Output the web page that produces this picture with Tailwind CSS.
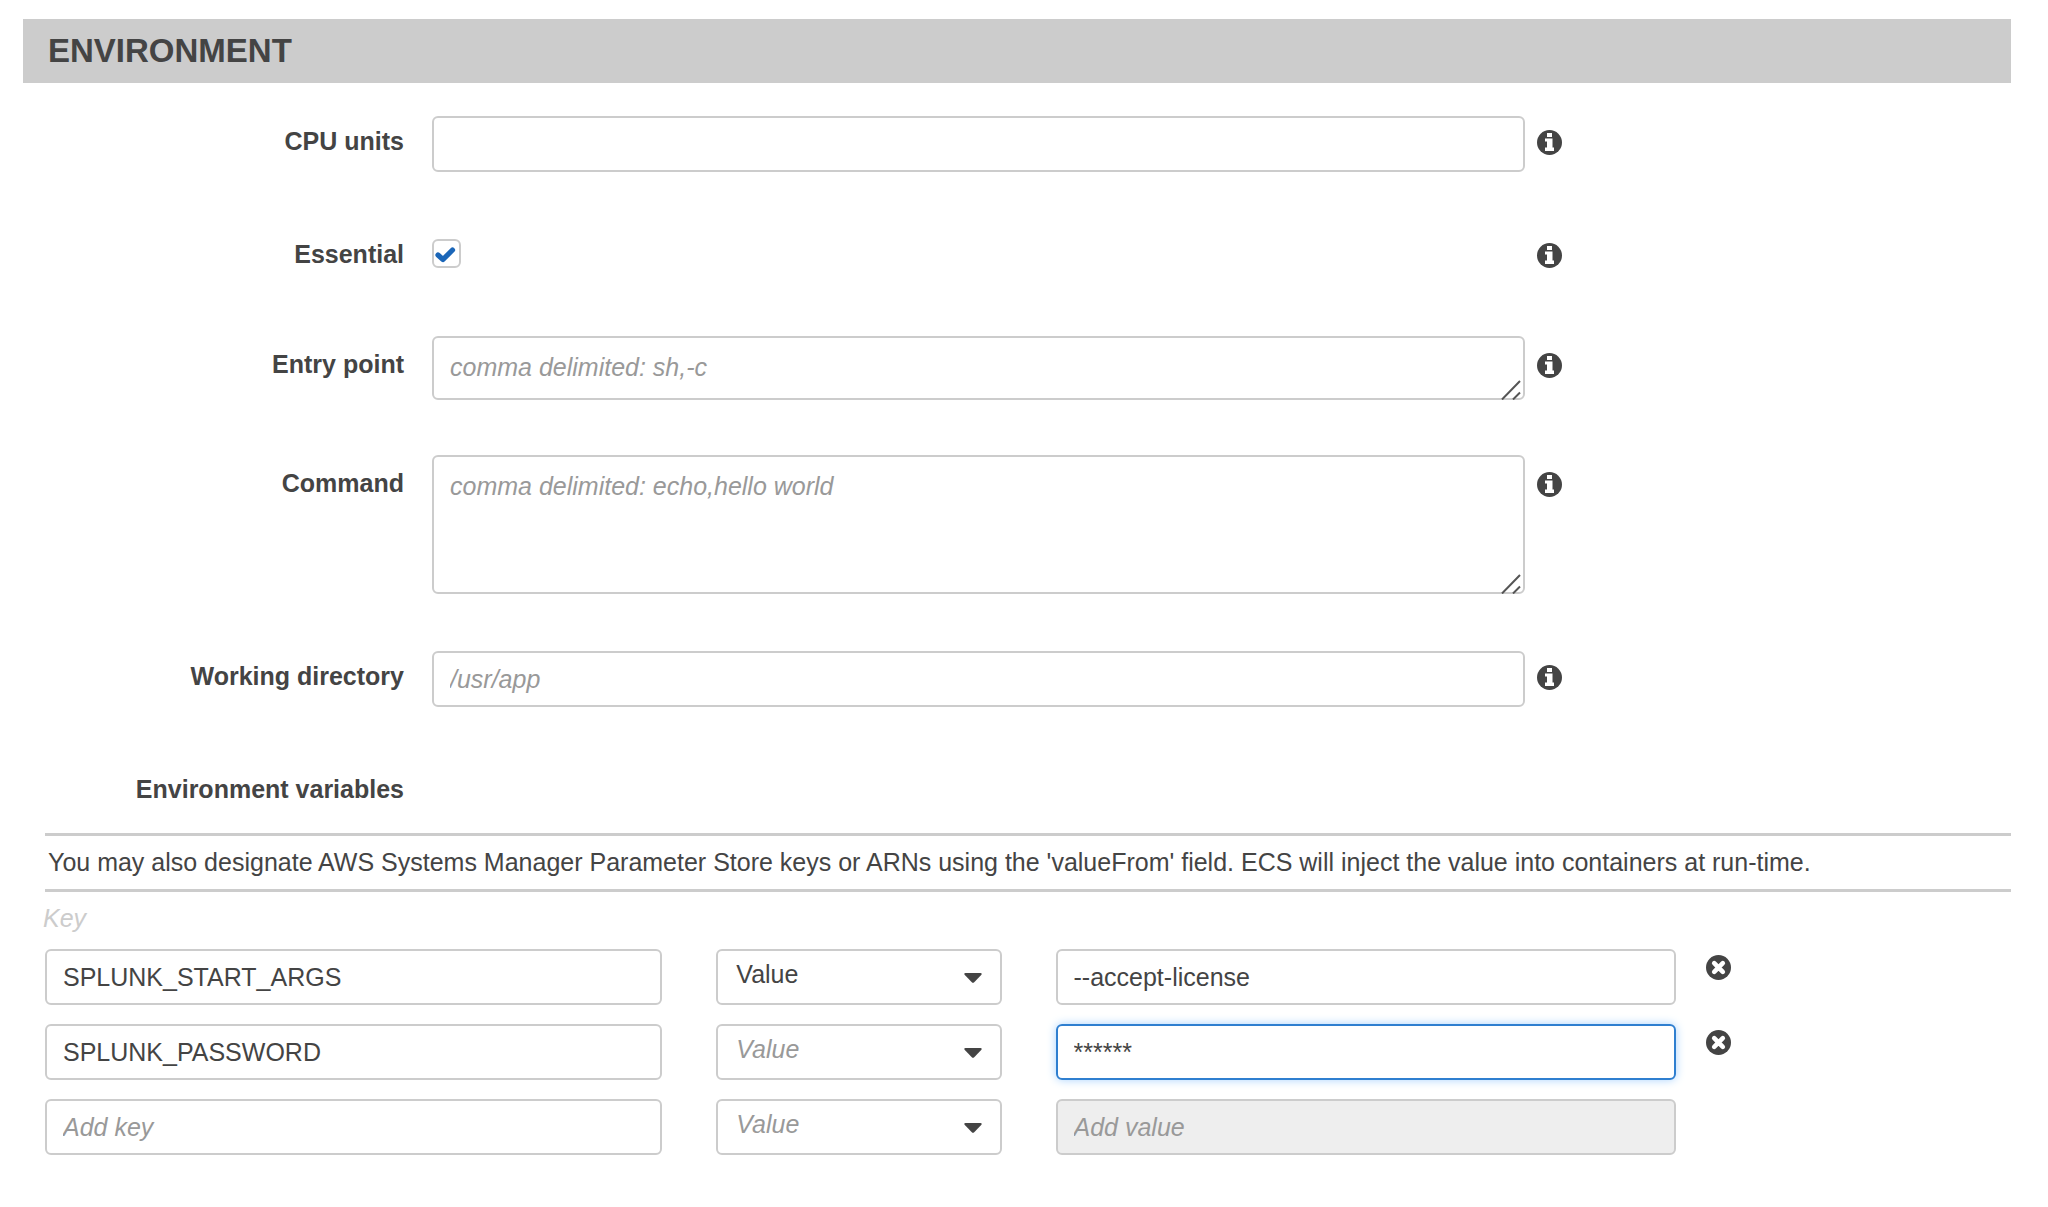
<!DOCTYPE html>
<html lang="en">
<head>
<meta charset="utf-8">
<meta name="viewport" content="width=device-width, initial-scale=1">
<title>Environment</title>
<script src="https://cdn.jsdelivr.net/npm/@tailwindcss/browser@4"></script>
</head>
<body class="bg-white font-['Liberation_Sans',Arial,sans-serif] text-[25px] leading-[30px] text-[#444]">
<!-- Shared icons -->
<svg class="hidden" aria-hidden="true">
  <symbol id="info" viewBox="0 0 25 25">
    <circle cx="12.5" cy="12.5" r="12.5" fill="#444"/>
    <path d="M10 3h5v4h-5zM8 8.500h7.500v9H17v3.500H8v-3.500h2v-6H8z" fill="#fff"/>
  </symbol>
  <symbol id="remove" viewBox="0 0 25 25">
    <circle cx="12.500" cy="12.500" r="12.500" fill="#444"/>
    <path d="M8.200 8.200l8.600 8.600M16.800 8.200l-8.600 8.600" stroke="#fff" stroke-width="4.600" stroke-linecap="round" fill="none"/>
  </symbol>
  <symbol id="grip" viewBox="0 0 20 20">
    <path d="M1 19.500L19 1M12 19.500l7-7" stroke="#555" stroke-width="2" fill="none"/>
  </symbol>
  <symbol id="caret" viewBox="0 0 18 10">
    <path d="M1.500 0h15q2 .3.700 2l-7 7.300q-1.200 1-2.400 0L.8 2Q-.5.3 1.500 0z" fill="#444"/>
  </symbol>
</svg>
<main class="pt-[19px] pr-[37px] pb-12 pl-[23px]">
  <h1 class="flex h-16 items-center bg-[#ccc] px-[25px] text-[33px] font-bold leading-10">ENVIRONMENT</h1>

  <form class="flex flex-col">
    <div class="mt-[33px] grid grid-cols-[381px_1121fr_486fr] items-start">
      <label for="cpu" class="pt-[10px] text-right font-bold">CPU units</label>
      <input id="cpu" type="text" class="ml-7 h-14 rounded-md border-2 border-[#ccc] px-4 placeholder:italic placeholder:text-[#999]">
      <button type="button" aria-label="About CPU units" class="mt-[14px] ml-3 size-[25px]"><svg class="size-full"><use href="#info"/></svg></button>
    </div>

    <div class="mt-[67px] grid grid-cols-[381px_1121fr_486fr] items-start">
      <label for="essential" class="text-right font-bold">Essential</label>
      <span class="relative ml-7 size-[29px]">
        <input id="essential" type="checkbox" checked class="block size-full appearance-none rounded-md border-2 border-[#ccc] bg-white">
        <svg class="pointer-events-none absolute inset-0 size-full" viewBox="0 0 29 29"><path d="M6 16l5 4.500L20.500 11" stroke="#1b66b8" stroke-width="5.200" stroke-linecap="round" stroke-linejoin="round" fill="none"/></svg>
      </span>
      <button type="button" aria-label="About Essential" class="mt-1 ml-3 size-[25px]"><svg class="size-full"><use href="#info"/></svg></button>
    </div>

    <div class="mt-[67px] grid grid-cols-[381px_1121fr_486fr] items-start">
      <label for="entry" class="pt-[13px] text-right font-bold">Entry point</label>
      <div class="relative ml-7">
        <textarea id="entry" placeholder="comma delimited: sh,-c" class="block h-16 w-full resize-none overflow-hidden rounded-md border-2 border-[#ccc] px-4 py-[14px] placeholder:italic placeholder:text-[#999]"></textarea>
        <svg class="pointer-events-none absolute right-1 bottom-0 size-5"><use href="#grip"/></svg>
      </div>
      <button type="button" aria-label="About Entry point" class="mt-[17px] ml-3 size-[25px]"><svg class="size-full"><use href="#info"/></svg></button>
    </div>

    <div class="mt-[55px] grid grid-cols-[381px_1121fr_486fr] items-start">
      <label for="command" class="pt-[13px] text-right font-bold">Command</label>
      <div class="relative ml-7">
        <textarea id="command" placeholder="comma delimited: echo,hello world" class="block h-[139px] w-full resize-none overflow-hidden rounded-md border-2 border-[#ccc] px-4 py-[14px] placeholder:italic placeholder:text-[#999]"></textarea>
        <svg class="pointer-events-none absolute right-1 bottom-0 size-5"><use href="#grip"/></svg>
      </div>
      <button type="button" aria-label="About Command" class="mt-[17px] ml-3 size-[25px]"><svg class="size-full"><use href="#info"/></svg></button>
    </div>

    <div class="mt-[57px] grid grid-cols-[381px_1121fr_486fr] items-start">
      <label for="workdir" class="pt-[10px] text-right font-bold">Working directory</label>
      <input id="workdir" type="text" placeholder="/usr/app" class="ml-7 h-14 rounded-md border-2 border-[#ccc] px-4 placeholder:italic placeholder:text-[#999]">
      <button type="button" aria-label="About Working directory" class="mt-[14px] ml-3 size-[25px]"><svg class="size-full"><use href="#info"/></svg></button>
    </div>

    <h2 class="mt-[67px] w-[381px] text-right font-bold">Environment variables</h2>

    <p class="mt-[29px] ml-[22px] border-y-3 border-[#ccc] px-[3px] pt-[11px] pb-3">You may also designate AWS Systems Manager Parameter Store keys or ARNs using the 'valueFrom' field. ECS will inject the value into containers at run-time.</p>

    <div class="mt-[11px] ml-5 italic text-[#ccc]">Key</div>

    <div class="mt-4 ml-[22px] flex flex-col gap-[19px]">
      <div class="grid grid-cols-[617fr_285fr_620fr_281fr] gap-x-[54px]">
        <input type="text" aria-label="Key 1" value="SPLUNK_START_ARGS" class="h-14 min-w-0 rounded-md border-2 border-[#ccc] px-4">
        <div class="relative">
          <select aria-label="Type 1" class="h-14 w-full appearance-none rounded-md border-2 border-[#ccc] bg-white px-[18px] pb-[6px]"><option>Value</option><option>ValueFrom</option></select>
          <svg class="pointer-events-none absolute top-6 right-5 h-[10px] w-[18px]"><use href="#caret"/></svg>
        </div>
        <input type="text" aria-label="Value 1" value="--accept-license" class="h-14 min-w-0 rounded-md border-2 border-[#ccc] px-4">
        <button type="button" aria-label="Remove variable 1" class="mt-[6px] -ml-6 size-[25px]"><svg class="size-full"><use href="#remove"/></svg></button>
      </div>
      <div class="grid grid-cols-[617fr_285fr_620fr_281fr] gap-x-[54px]">
        <input type="text" aria-label="Key 2" value="SPLUNK_PASSWORD" class="h-14 min-w-0 rounded-md border-2 border-[#ccc] px-4">
        <div class="relative">
          <select aria-label="Type 2" class="h-14 w-full appearance-none rounded-md border-2 border-[#ccc] bg-white px-[18px] pb-[6px] italic text-[#999]"><option>Value</option><option>ValueFrom</option></select>
          <svg class="pointer-events-none absolute top-6 right-5 h-[10px] w-[18px]"><use href="#caret"/></svg>
        </div>
        <input type="text" aria-label="Value 2" value="******" class="h-14 min-w-0 rounded-md border-2 border-[#2f7fd0] px-4 shadow-[0_0_10px_#a9d3ff] outline-none">
        <button type="button" aria-label="Remove variable 2" class="mt-[6px] -ml-6 size-[25px]"><svg class="size-full"><use href="#remove"/></svg></button>
      </div>
      <div class="grid grid-cols-[617fr_285fr_620fr_281fr] gap-x-[54px]">
        <input type="text" aria-label="New key" placeholder="Add key" class="h-14 min-w-0 rounded-md border-2 border-[#ccc] px-4 placeholder:italic placeholder:text-[#999]">
        <div class="relative">
          <select aria-label="New type" class="h-14 w-full appearance-none rounded-md border-2 border-[#ccc] bg-white px-[18px] pb-[6px] italic text-[#999]"><option>Value</option><option>ValueFrom</option></select>
          <svg class="pointer-events-none absolute top-6 right-5 h-[10px] w-[18px]"><use href="#caret"/></svg>
        </div>
        <input type="text" aria-label="New value" placeholder="Add value" disabled class="h-14 min-w-0 rounded-md border-2 border-[#ccc] bg-[#eee] px-4 placeholder:italic placeholder:text-[#999]">
      </div>
    </div>
  </form>
</main>
</body>
</html>
